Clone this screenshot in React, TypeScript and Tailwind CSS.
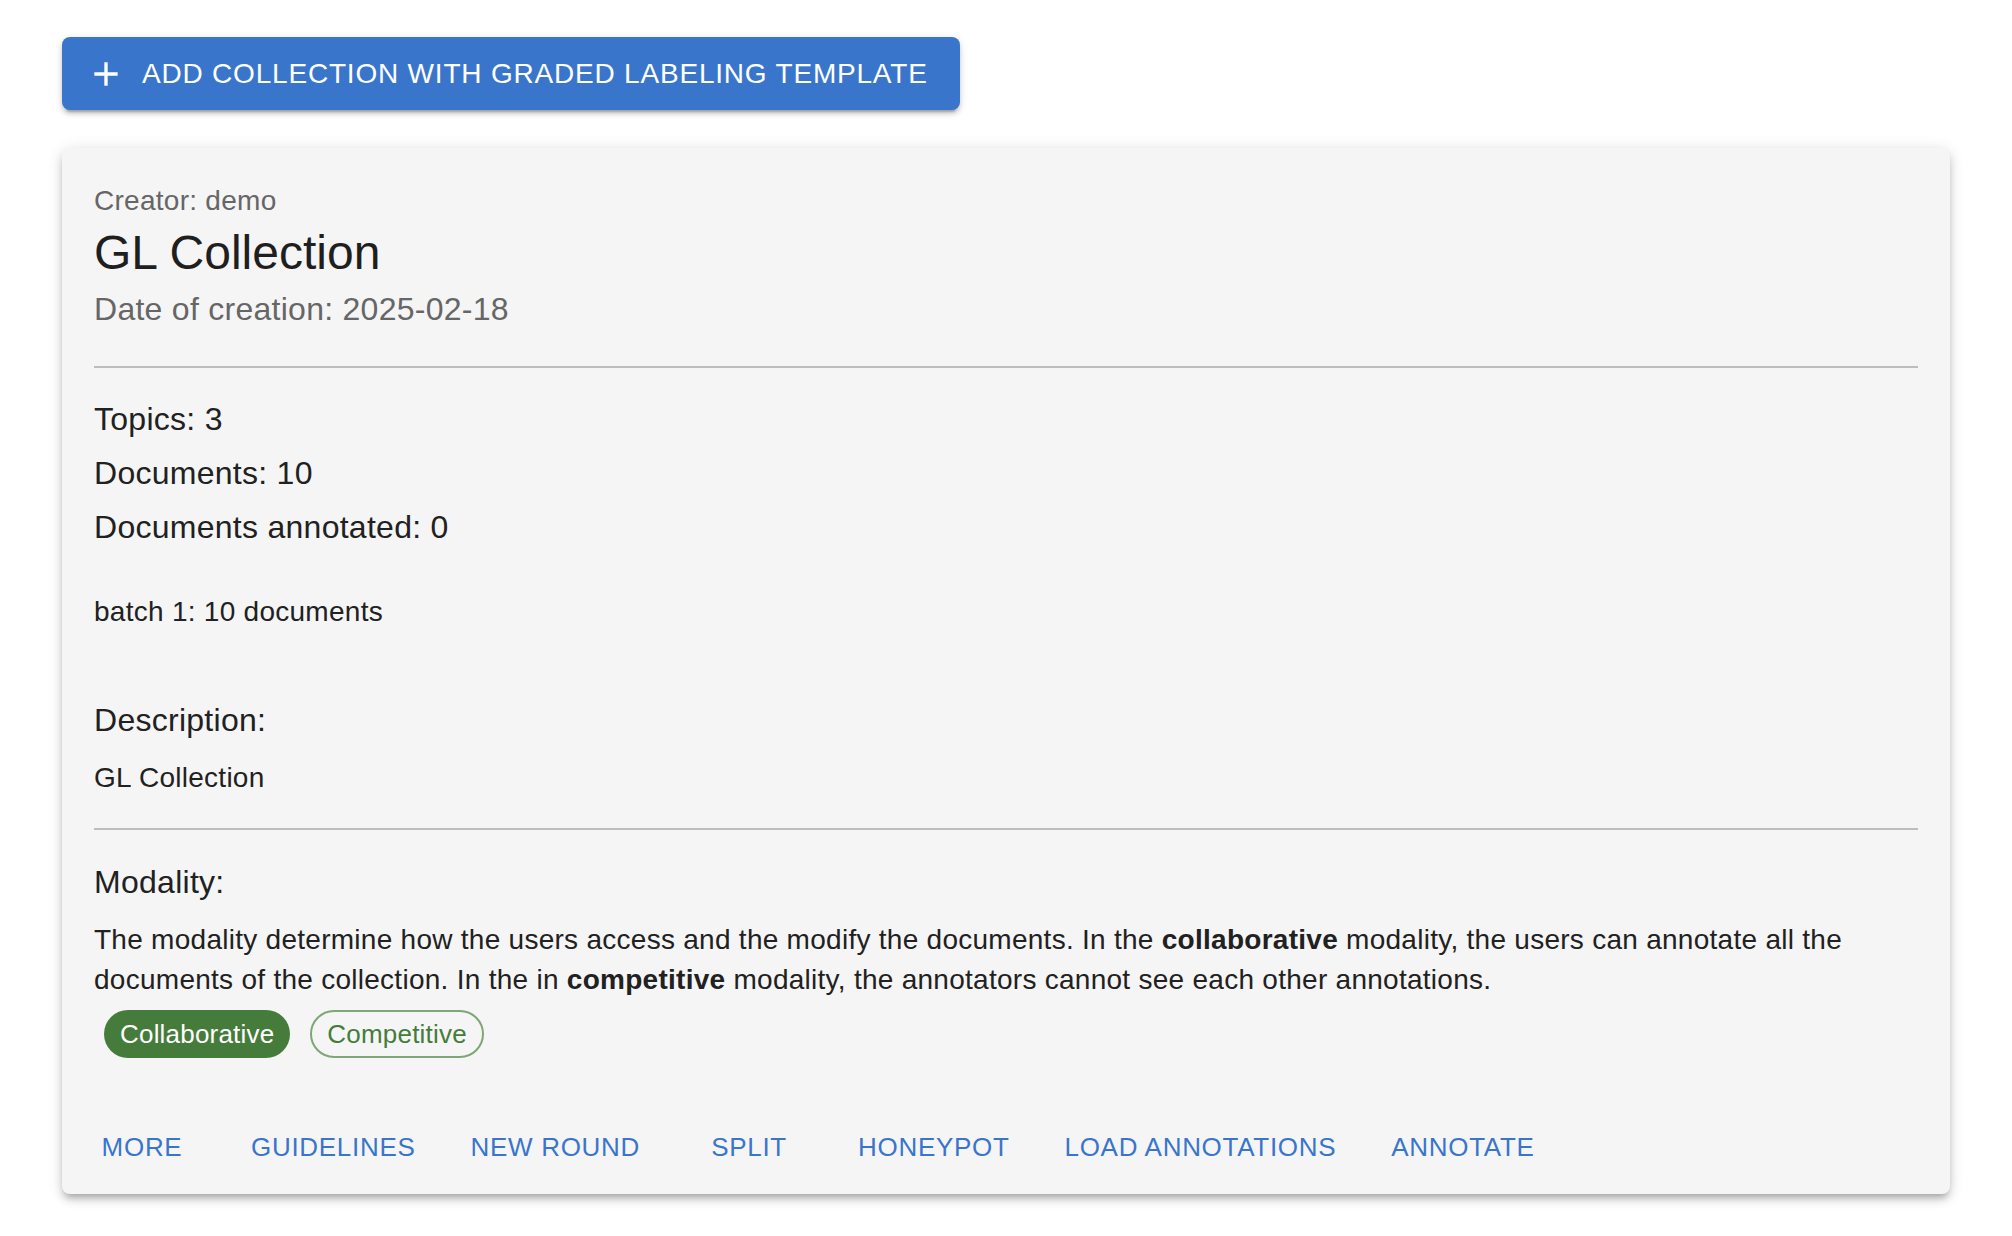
import React from "react";

const actions = ["More", "Guidelines", "New round", "Split", "Honeypot", "Load annotations", "Annotate"];

function PlusIcon() {
  return (
    <svg viewBox="0 0 24 24" className="h-[40px] w-[40px] fill-current">
      <path d="M19 13h-6v6h-2v-6H5v-2h6V5h2v6h6v2z" />
    </svg>
  );
}

export default function App() {
  return (
    <div
      className="min-h-screen bg-white px-[62px] pt-[37px] pb-[40px]"
      style={{ fontFamily: '"Liberation Sans", Arial, Helvetica, sans-serif' }}
    >
      <button
        type="button"
        className="flex items-center gap-[16px] rounded-[8px] bg-[#3a75cc] py-[12px] pl-[24px] pr-[32px] text-[28px] leading-[49px] tracking-[0.8px] text-white uppercase shadow-[0_6px_2px_-4px_rgba(0,0,0,0.2),0_4px_4px_0_rgba(0,0,0,0.14),0_2px_10px_0_rgba(0,0,0,0.12)]"
      >
        <PlusIcon />
        <span>Add collection with graded labeling template</span>
      </button>

      <div className="mt-[38px] rounded-[8px] bg-[#f5f5f5] px-[32px] pt-[33px] pb-[14px] text-[#212121] shadow-[0_6px_6px_-4px_rgba(0,0,0,0.2),0_6px_8px_0_rgba(0,0,0,0.14),0_2px_16px_0_rgba(0,0,0,0.12)]">
        <div className="tracking-[0.27px]">
          <p className="text-[28px] leading-[40px] text-[#666666]">Creator: demo</p>
          <h2 className="text-[48px] leading-[64px] tracking-normal text-[#1f1f1f]">GL Collection</h2>
          <p className="text-[32px] leading-[48px] text-[#666666]">Date of creation: 2025-02-18</p>

          <div className="mt-[33px] h-[2px] bg-[#bdbdbd]" />

          <div className="mt-[24px] text-[32px] leading-[54px]">
            <p>Topics: 3</p>
            <p>Documents: 10</p>
            <p>Documents annotated: 0</p>
          </div>

          <p className="mt-[38px] text-[28px] leading-[40px]">batch 1: 10 documents</p>

          <p className="mt-[64px] text-[32px] leading-[48px]">Description:</p>
          <p className="mt-[14px] text-[28px] leading-[40px]">GL Collection</p>

          <div className="mt-[30px] h-[2px] bg-[#bdbdbd]" />

          <p className="mt-[28px] text-[32px] leading-[48px]">Modality:</p>
          <p className="mt-[14px] text-[28px] leading-[40px]">
            The modality determine how the users access and the modify the documents. In the{" "}
            <b className="font-bold">collaborative</b> modality, the users can annotate all the documents of the
            collection. In the in <b className="font-bold">competitive</b> modality, the annotators cannot see each
            other annotations.
          </p>

          <div className="mt-[10px] flex gap-[20px] pl-[10px]">
            <span className="flex h-[48px] items-center rounded-full bg-[#467c3b] px-[16px] text-[26px] tracking-[0.2px] text-white">
              Collaborative
            </span>
            <span className="flex h-[48px] items-center rounded-full border-2 border-[#7ea676] px-[15px] text-[26px] tracking-[0.2px] text-[#467c3b]">
              Competitive
            </span>
          </div>
        </div>

        <div className="-mx-[16px] mt-[56px] flex gap-[35px]">
          {actions.map((a) => (
            <button
              key={a}
              type="button"
              className="min-w-[128px] px-[10px] py-[10px] text-center text-[26px] leading-[46px] tracking-[0.7px] text-[#3a75cc] uppercase"
            >
              {a}
            </button>
          ))}
        </div>
      </div>
    </div>
  );
}
